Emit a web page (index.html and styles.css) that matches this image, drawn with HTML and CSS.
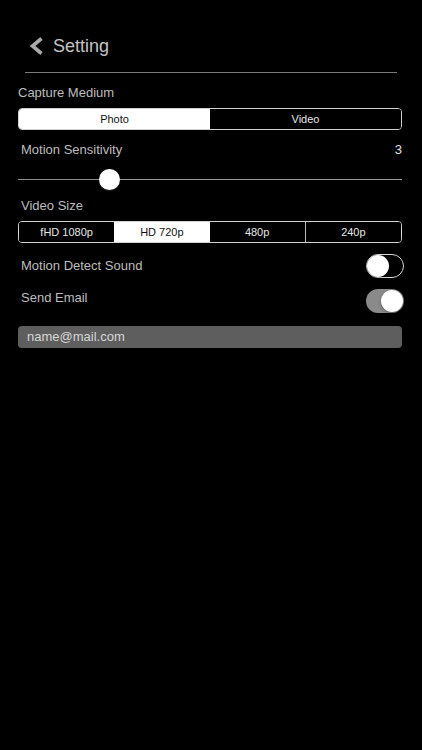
FILE: index.html
```html
<!DOCTYPE html>
<html lang="en">
<head>
<meta charset="utf-8">
<title>Setting</title>
<link rel="stylesheet" href="styles.css">
</head>
<body>
<div class="screen">
  <header class="header">
    <svg class="back" width="15" height="18" viewBox="0 0 15 18" aria-hidden="true">
      <polyline points="12.5,1.5 3.5,9 12.5,16.5" fill="none" stroke="#a9a9a9" stroke-width="3.6" stroke-linejoin="miter" stroke-linecap="butt"/>
    </svg>
    <span class="title">Setting</span>
  </header>
  <div class="divider"></div>

  <main class="content">
    <div class="label label-first">Capture Medium</div>
    <div class="segmented seg-two">
      <div class="seg active">Photo</div>
      <div class="seg">Video</div>
    </div>

    <div class="row-value">
      <span class="label-inline">Motion Sensitivity</span>
      <span class="value">3</span>
    </div>
    <div class="slider">
      <div class="track track-left"></div>
      <div class="thumb"></div>
      <div class="track track-right"></div>
    </div>

    <div class="label label-sub">Video Size</div>
    <div class="segmented seg-four">
      <div class="seg">fHD 1080p</div>
      <div class="seg active">HD 720p</div>
      <div class="seg">480p</div>
      <div class="seg">240p</div>
    </div>

    <div class="toggle-row row-sound">
      <span class="label-inline">Motion Detect Sound</span>
      <div class="toggle off"><div class="knob"></div></div>
    </div>
    <div class="toggle-row row-email">
      <span class="label-inline lift">Send Email</span>
      <div class="toggle on"><div class="knob"></div></div>
    </div>

    <div class="input">name@mail.com</div>
  </main>
</div>
</body>
</html>
```

FILE: styles.css
```css
html, body {
  margin: 0;
  padding: 0;
  background: #000;
}
body {
  font-family: "Liberation Sans", Arial, Helvetica, sans-serif;
  color: #c6c6c6;
  width: 422px;
  height: 750px;
  overflow: hidden;
}
.screen {
  display: flex;
  flex-direction: column;
}
.header {
  margin-top: 30px;
  height: 32px;
  display: flex;
  align-items: center;
  padding-left: 29px;
}
.back {
  display: block;
  flex: 0 0 auto;
}
.title {
  margin-left: 9px;
  font-size: 18px;
  color: #c4c4c4;
  line-height: 20px;
}
.divider {
  margin: 10px 25px 0 25px;
  height: 1px;
  background: #7a7a7a;
}
.content {
  padding: 0 20px 0 18px;
  display: flex;
  flex-direction: column;
}
.label {
  font-size: 13px;
  line-height: 16px;
  color: #bdbdbd;
}
.label-first {
  margin-top: 12px;
}
.label-sub {
  margin-top: 8px;
  padding-left: 3px;
}
.segmented {
  display: flex;
  height: 22px;
  border: 1px solid #d2d2d2;
  border-radius: 4px;
  overflow: hidden;
  box-sizing: border-box;
}
.seg-two {
  margin-top: 7px;
}
.seg-four {
  margin-top: 7px;
}
.seg {
  flex: 1 1 0;
  display: flex;
  align-items: center;
  justify-content: center;
  font-size: 11px;
  color: #e6e6e6;
  background: #000;
}
.seg-four .seg + .seg {
  border-left: 1px solid #bdbdbd;
}
.seg-four .seg.active + .seg,
.seg-four .seg.active {
  border-left: none;
}
.seg.active {
  background: #fff;
  color: #111;
}
.row-value {
  margin-top: 12px;
  padding-left: 3px;
  display: flex;
  justify-content: space-between;
  align-items: center;
  height: 16px;
}
.label-inline {
  font-size: 13px;
  line-height: 16px;
  color: #bdbdbd;
}
.value {
  font-size: 13px;
  line-height: 16px;
  color: #e2e2e2;
}
.slider {
  margin-top: 11px;
  height: 21px;
  display: flex;
  align-items: center;
}
.track {
  height: 1.5px;
  background: #8c8c8c;
}
.track-left {
  flex: 0 0 81px;
}
.track-right {
  flex: 1 1 auto;
  background: #9a9a9a;
}
.thumb {
  flex: 0 0 21px;
  height: 21px;
  border-radius: 50%;
  background: #fff;
  box-shadow: 0 1px 2px rgba(255,255,255,0.15);
}
.toggle-row {
  display: flex;
  justify-content: space-between;
  align-items: center;
  height: 24px;
  padding-left: 3px;
  margin-right: -2px;
}
.row-sound {
  margin-top: 11px;
}
.row-email {
  margin-top: 11px;
}
.lift {
  margin-bottom: 7px;
}
.toggle {
  width: 38px;
  height: 24px;
  border-radius: 12px;
  box-sizing: border-box;
  display: flex;
  align-items: center;
  padding: 1px;
}
.toggle.off {
  border: 1.5px solid #d8d8d8;
  background: #000;
  justify-content: flex-start;
  padding: 0;
}
.toggle.off .knob {
  width: 22px;
  height: 22px;
}
.toggle.on {
  background: #8a8a8a;
  justify-content: flex-end;
}
.knob {
  width: 22px;
  height: 22px;
  border-radius: 50%;
  background: #fff;
  box-shadow: 0 1px 3px rgba(0,0,0,0.35);
}
.input {
  margin-top: 13px;
  height: 22px;
  border-radius: 4px;
  background: #5e5e5e;
  color: #d6d6d6;
  font-size: 13px;
  line-height: 22px;
  padding-left: 9px;
}
```
